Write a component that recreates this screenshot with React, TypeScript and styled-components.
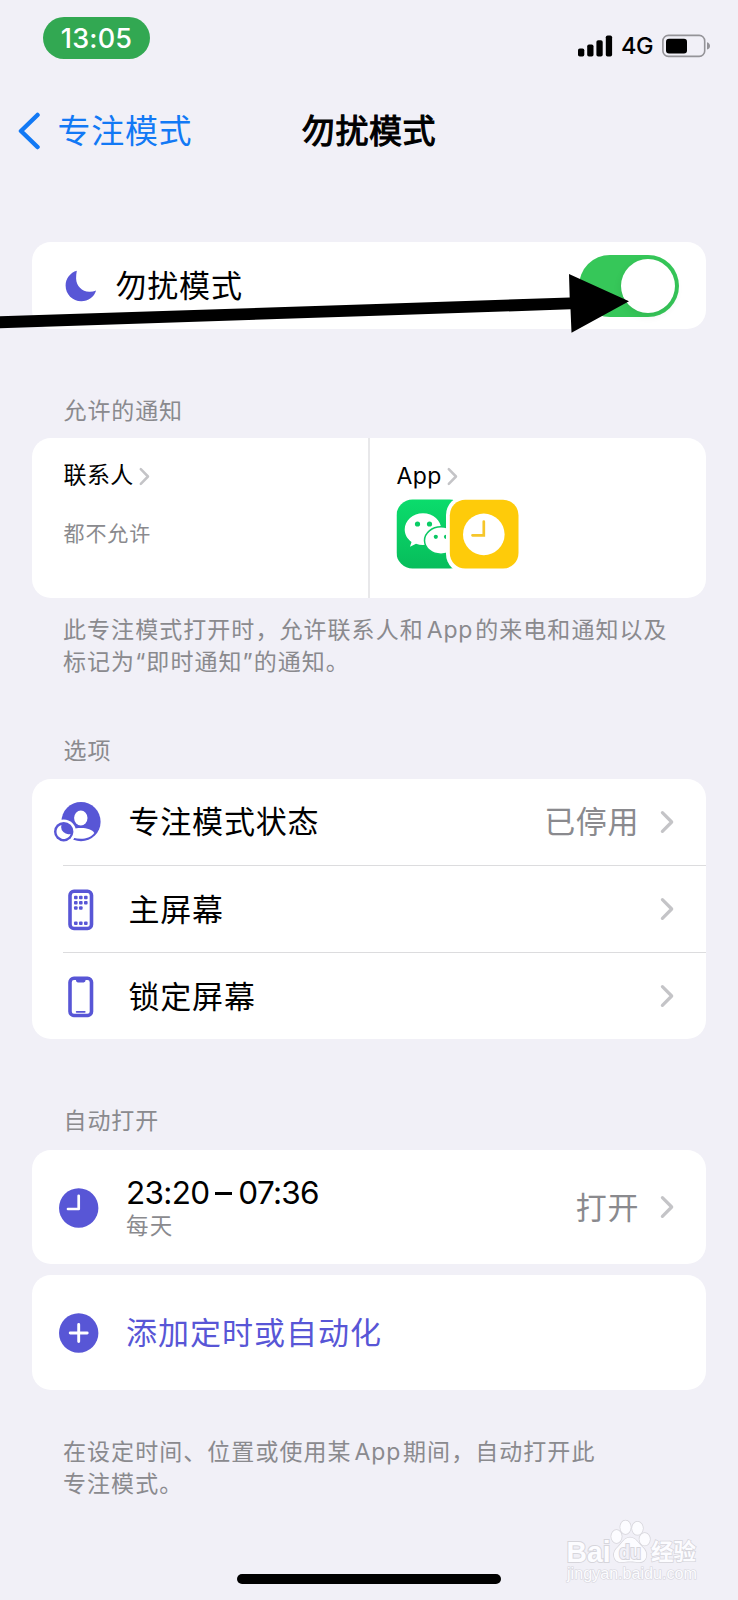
import React from 'react';
import styled, { createGlobalStyle } from 'styled-components';

const INDIGO = '#5856d6';
const GRAY = '#8a8a8e';

const GlobalStyle = createGlobalStyle`
  *, *::before, *::after { box-sizing: border-box; }
  body {
    margin: 0;
    background: #f1f0f7;
    color: #000;
    font-family: Inter, "Noto Sans CJK SC", sans-serif;
    text-autospace: no-autospace;
  }
  svg { display: block; flex: none; }
`;

const Screen = styled.main`
  position: relative;
  width: 738px;
  height: 1600px;
  overflow: hidden;
  display: flex;
  flex-direction: column;
  padding: 0 32px;
`;

const StatusBar = styled.header`
  display: flex;
  justify-content: space-between;
  align-items: flex-start;
  height: 92px;
  margin: 0 -5px 0 11px;
  padding-top: 17px;
`;

const TimePill = styled.div`
  width: 107px;
  height: 42px;
  border-radius: 21px;
  background: #32a852;
  color: #fff;
  font-size: 27px;
  font-weight: 500;
  line-height: 43px;
  letter-spacing: 0.2px;
  text-align: center;
`;

const StatusIcons = styled.div`
  display: flex;
  align-items: center;
  padding-top: 17px;
  height: 40px;
`;

const Network = styled.span`
  width: 33px;
  margin: 0 8px 0 8px;
  font-size: 23.5px;
  font-weight: 500;
  line-height: 24px;
  letter-spacing: -0.5px;
`;

const NavBar = styled.nav`
  display: grid;
  grid-template-columns: 1fr auto 1fr;
  align-items: center;
  height: 76px;
  margin: 0 -14px 74px;
  padding-top: 1px;
`;

const BackLink = styled.a`
  display: flex;
  align-items: center;
  gap: 17.5px;
  color: #1279f5;
  font-size: 33px;
  letter-spacing: 0.7px;
  line-height: 40px;
`;

const Title = styled.h1`
  margin: 0;
  font-size: 33px;
  font-weight: 400;
  line-height: 40px;
  letter-spacing: 0.6px;
  -webkit-text-stroke: 1.1px #000;
`;

const Card = styled.section<{ $height: number; $gap?: number }>`
  flex: none;
  display: flex;
  height: ${(p) => p.$height}px;
  margin-bottom: ${(p) => p.$gap ?? 0}px;
  border-radius: 19px;
  background: #fff;
  overflow: hidden;
`;

const StackCard = styled(Card)`
  flex-direction: column;
`;

const SectionTitle = styled.h2<{ $top: number; $bottom?: number }>`
  flex: none;
  margin: ${(p) => p.$top}px 0 ${(p) => p.$bottom ?? 11}px 31.5px;
  color: ${GRAY};
  font-size: 23px;
  font-weight: 400;
  letter-spacing: 0.9px;
  line-height: 34px;
`;

const Note = styled.p<{ $top: number }>`
  flex: none;
  margin: ${(p) => p.$top}px 0 0 31px;
  color: ${GRAY};
  font-size: 23px;
  letter-spacing: 1.05px;
  line-height: 31.5px;
  white-space: nowrap;
`;

const Latin = styled.span`
  margin: 0 2px 0 3px;
  letter-spacing: 0.8px;
`;

const SwitchRow = styled.div`
  flex: 1;
  display: flex;
  align-items: center;
  padding: 0 27px 0 33px;
`;

const Label = styled.span`
  flex: 1;
  padding-top: 1px;
  margin-left: -0.5px;
  font-size: 31px;
  letter-spacing: 0.8px;
  line-height: 40px;
`;

const Switch = styled.button`
  display: flex;
  justify-content: flex-end;
  width: 100px;
  height: 62px;
  padding: 4px;
  border: 0;
  border-radius: 31px;
  background: #36c759;
`;

const Knob = styled.span`
  width: 54px;
  height: 54px;
  border-radius: 50%;
  background: #fff;
  box-shadow: 0 3px 8px rgba(0, 0, 0, 0.08);
`;

const Half = styled.div<{ $divided?: boolean }>`
  width: ${(p) => (p.$divided ? 338 : 336)}px;
  padding: 20px 0 0 ${(p) => (p.$divided ? 31.5 : 26.5)}px;
  border-right: ${(p) => (p.$divided ? '2px solid #e8e8ea' : '0')};
`;

const HalfTitle = styled.div`
  display: flex;
  align-items: center;
  gap: 5.5px;
  height: 36px;
  font-size: 23px;
  letter-spacing: 0.4px;
  line-height: 34px;
`;

const Muted = styled.div`
  margin-top: 22px;
  color: ${GRAY};
  font-size: 21px;
  letter-spacing: 0.9px;
  line-height: 36px;
`;

const AppStack = styled.div`
  margin: 5px 0 0 -0.5px;
`;

const TitleText = styled.span<{ $lift?: boolean }>`
  padding-bottom: ${(p) => (p.$lift ? 2 : 0)}px;
`;

const Row = styled.div`
  flex: 1;
  display: flex;
  align-items: center;
  padding-right: 32px;
`;

const RowDivider = styled.div`
  height: 1.5px;
  margin-left: 31px;
  background: #dcdcde;
`;

const IconSlot = styled.div<{ $width: number }>`
  width: ${(p) => p.$width}px;
  padding: 1px 0 0 20px;
`;

const Value = styled.span`
  margin-right: 21px;
  padding-top: 1px;
  color: ${GRAY};
  font-size: 31px;
  letter-spacing: 0.6px;
  line-height: 40px;
`;

const Schedule = styled.div`
  flex: 1;
  display: flex;
  flex-direction: column;
`;

const TimeRange = styled.span`
  font-size: 31.5px;
  line-height: 38px;
  letter-spacing: -0.7px;
`;

const Dash = styled.span`
  display: inline-block;
  width: 17px;
  height: 2.6px;
  margin: 0 6px 0 6px;
  background: #000;
  vertical-align: 9px;
`;

const Repeat = styled.span`
  color: ${GRAY};
  font-size: 22.5px;
  letter-spacing: 1.2px;
  line-height: 28px;
`;

const AddLabel = styled(Label)`
  margin-left: 0;
  color: ${INDIGO};
  letter-spacing: 1px;
`;

const HomeIndicator = styled.div`
  flex: none;
  width: 264px;
  height: 10px;
  margin: auto auto 16px;
  border-radius: 5px;
  background: #000;
`;

const ArrowOverlay = styled.svg`
  position: absolute;
  left: 0;
  top: 260px;
`;

const Watermark = styled.svg`
  position: absolute;
  left: 560px;
  top: 1512px;
`;

const Chevron = ({ small }: { small?: boolean }) =>
  small ? (
    <svg width="11" height="19" viewBox="0 0 11 19" fill="none" stroke="#c4c4c7" strokeWidth="2.5" strokeLinecap="round" strokeLinejoin="round">
      <path d="M1.8 2.2 9 9.5 1.8 16.8" />
    </svg>
  ) : (
    <svg width="14" height="24" viewBox="0 0 14 24" fill="none" stroke="#c4c4c7" strokeWidth="3.2" strokeLinecap="round" strokeLinejoin="round">
      <path d="M2.4 2.7 11.7 12 2.4 21.3" />
    </svg>
  );

const FocusStatusIcon = () => (
  <svg width="50" height="44" viewBox="52 801 50 44">
    <circle cx="81" cy="822.7" r="19.6" fill={INDIGO} />
    <ellipse cx="80.8" cy="819" rx="6.7" ry="7.4" fill="#fff" />
    <path d="M66.5 835.5C69 830.8 75 829 81 829s11.5 1.8 13.3 4.9C91 838 86 839.700 81 839.700c-5.500 0-10-1.200-14.500-4.200Z" fill="#fff" />
    <circle cx="63.700" cy="832.700" r="12.300" fill="#fff" />
    <circle cx="63.700" cy="832.700" r="9.700" fill={INDIGO} />
    <path d="M61.500 825.900a7.200 7.200 0 1 0 9.100 9 7.300 7.300 0 0 1-9.100-9Z" fill="#fff" />
  </svg>
);

const HomeScreenIcon = () => (
  <svg width="50" height="42" viewBox="0 0 50 42" fill={INDIGO}>
    <rect x="18" y="2.300" width="21.500" height="37.200" rx="4" fill="none" stroke={INDIGO} strokeWidth="3.600" />
    {[
      [22, 6.7], [27, 6.7], [32, 6.7],
      [22, 12], [27, 12], [32, 12],
      [22, 17.2], [27, 17.2],
      [22, 32.5], [27, 32.5], [32, 32.5],
    ].map(([x, y]) => (
      <rect key={`${x}-${y}`} x={x} y={y} width="3.600" height="3.600" rx="1" />
    ))}
  </svg>
);

const LockScreenIcon = () => (
  <svg width="50" height="42" viewBox="0 0 50 42" fill={INDIGO}>
    <rect x="18" y="2.300" width="21.500" height="37.200" rx="4" fill="none" stroke={INDIGO} strokeWidth="3.600" />
    <path d="M24 3h9.500v1.600q0 1.800-1.800 1.800h-5.900q-1.800 0-1.800-1.800Z" />
    <rect x="23.800" y="35" width="9.800" height="1.700" rx=".8" />
  </svg>
);

const ClockIcon = () => (
  <svg width="54" height="40" viewBox="0 0 54 40" fill="none">
    <circle cx="26.700" cy="20" r="19.700" fill={INDIGO} />
    <path d="M26.700 7.800V21H16" stroke="#fff" strokeWidth="2.700" strokeLinecap="round" strokeLinejoin="round" />
  </svg>
);

const PlusIcon = () => (
  <svg width="54" height="40" viewBox="0 0 54 40" fill="none">
    <circle cx="26.700" cy="20" r="19.700" fill={INDIGO} />
    <path d="M26.700 11.500v17M18.200 20h17" stroke="#fff" strokeWidth="2.900" strokeLinecap="round" />
  </svg>
);

const AppIcons = () => (
  <svg width="124" height="70" viewBox="396.500 499 124 70">
    <defs>
      <linearGradient id="wechat" x1="0" y1="0" x2="0" y2="1">
        <stop offset="0" stopColor="#0bdc6c" />
        <stop offset="1" stopColor="#07bd5b" />
      </linearGradient>
      <clipPath id="tile">
        <rect x="397" y="499.500" width="69" height="69" rx="16" />
      </clipPath>
    </defs>
    <g clipPath="url(#tile)">
      <rect x="397" y="499" width="69" height="70" fill="url(#wechat)" />
      <path d="M423.500 513.300c-10.200 0-18.300 7.200-18.300 16.300 0 5 2.500 9.400 6.800 12.300l-1.500 4.800 6-3a21 21 0 0 0 7 1.200c10.200 0 18.300-6.800 18.300-15.300 0-9.100-8.100-16.300-18.300-16.300Z" fill="#fff" />
      <circle cx="418" cy="524" r="2.600" fill="#09cc65" />
      <circle cx="430" cy="524" r="2.600" fill="#09cc65" />
      <ellipse cx="441.500" cy="540.500" rx="16.500" ry="13.700" fill="#fff" stroke="#0ac863" strokeWidth="1.500" />
      <circle cx="436.300" cy="536.800" r="2.100" fill="#09c763" />
      <circle cx="446.500" cy="536.800" r="2.100" fill="#09c763" />
    </g>
    <rect x="446.500" y="496" width="77" height="77" rx="19" fill="#fff" />
    <rect x="450.300" y="499.800" width="68.700" height="68.700" rx="15.500" fill="#fecb0a" />
    <circle cx="484.300" cy="534.400" r="20.800" fill="#fff" />
    <path d="M484.300 521.500V535.300H473" fill="none" stroke="#f6c62a" strokeWidth="2.700" strokeLinecap="round" />
  </svg>
);

export default function App() {
  return (
    <>
      <GlobalStyle />
      <Screen>
        <StatusBar>
          <TimePill>13:05</TimePill>
          <StatusIcons>
            <svg width="35" height="22" viewBox="0 0 35 22">
              <rect x="0" y="13.500" width="6.300" height="8" rx="1.800" />
              <rect x="9.200" y="9.500" width="6.300" height="12" rx="1.800" />
              <rect x="18.400" y="5.300" width="6.300" height="16.200" rx="1.800" />
              <rect x="27.800" y=".500" width="6.300" height="21" rx="1.800" />
            </svg>
            <Network>4G</Network>
            <svg width="49" height="24" viewBox="0 0 49 24">
              <rect x=".9" y="1.400" width="41.800" height="21" rx="5.500" fill="none" stroke="#949398" strokeWidth="1.600" />
              <rect x="4" y="4.700" width="21" height="14.700" rx="3" />
              <path d="M45 8.200q3 1 3 3.700t-3 3.700Z" fill="#949398" />
            </svg>
          </StatusIcons>
        </StatusBar>

        <NavBar>
          <BackLink>
            <svg width="22" height="38" viewBox="0 0 22 38" fill="none" stroke="#1279f5" strokeWidth="4.500" strokeLinecap="round" strokeLinejoin="round">
              <path d="M19.500 3 3 19l16.500 16" />
            </svg>
            专注模式
          </BackLink>
          <Title>勿扰模式</Title>
        </NavBar>

        <Card $height={87}>
          <SwitchRow>
            <svg width="51" height="32" viewBox="0 0 51 32">
              <path d="M11.800.7C5.300 2.500.6 8.500.6 15.500.6 24.200 7.500 31.300 16.300 31.300c7 0 12.900-4.200 14.800-10.700-2.300.9-4.600 1.300-6.900 1.200C17 21.700 11.300 16 11.100 8.600c0-2.600.2-5.200.7-7.900Z" fill={INDIGO} />
            </svg>
            <Label>勿扰模式</Label>
            <Switch aria-label="勿扰模式">
              <Knob />
            </Switch>
          </SwitchRow>
        </Card>

        <SectionTitle $top={65} $bottom={10}>允许的通知</SectionTitle>
        <Card $height={160}>
          <Half $divided>
            <HalfTitle>
              <TitleText $lift>联系人</TitleText>
              <Chevron small />
            </HalfTitle>
            <Muted>都不允许</Muted>
          </Half>
          <Half>
            <HalfTitle>
              <TitleText>App</TitleText>
              <Chevron small />
            </HalfTitle>
            <AppStack>
              <AppIcons />
            </AppStack>
          </Half>
        </Card>
        <Note $top={17}>
          此专注模式打开时，允许联系人和<Latin>App</Latin>的来电和通知以及
          <br />
          标记为“即时通知”的通知。
        </Note>

        <SectionTitle $top={56}>选项</SectionTitle>
        <StackCard $height={260}>
          <Row>
            <IconSlot $width={97}>
              <FocusStatusIcon />
            </IconSlot>
            <Label>专注模式状态</Label>
            <Value>已停用</Value>
            <Chevron />
          </Row>
          <RowDivider />
          <Row>
            <IconSlot $width={97}>
              <HomeScreenIcon />
            </IconSlot>
            <Label>主屏幕</Label>
            <Chevron />
          </Row>
          <RowDivider />
          <Row>
            <IconSlot $width={97}>
              <LockScreenIcon />
            </IconSlot>
            <Label>锁定屏幕</Label>
            <Chevron />
          </Row>
        </StackCard>

        <SectionTitle $top={65} $bottom={12}>自动打开</SectionTitle>
        <Card $height={114} $gap={11}>
          <Row>
            <IconSlot $width={94}>
              <ClockIcon />
            </IconSlot>
            <Schedule>
              <TimeRange>
                23:20<Dash />07:36
              </TimeRange>
              <Repeat>每天</Repeat>
            </Schedule>
            <Value>打开</Value>
            <Chevron />
          </Row>
        </Card>
        <Card $height={115}>
          <Row>
            <IconSlot $width={94}>
              <PlusIcon />
            </IconSlot>
            <AddLabel>添加定时或自动化</AddLabel>
          </Row>
        </Card>
        <Note $top={47}>
          在设定时间、位置或使用某<Latin>App</Latin>期间，自动打开此
          <br />
          专注模式。
        </Note>

        <HomeIndicator />

        <ArrowOverlay width="640" height="80" viewBox="0 260 640 80">
          <path d="M0 316.300 369 304.300 569.700 297.500 569 274l60 27.300-57.500 31.500-1-23.500L369 316 0 328.300Z" />
        </ArrowOverlay>

        <Watermark width="150" height="76" viewBox="560 1512 150 76" fill="#fcfcff" stroke="#d6d5db" strokeWidth="1.500" paintOrder="stroke">
          <ellipse cx="616.500" cy="1536.500" rx="5.200" ry="6.500" />
          <ellipse cx="625.500" cy="1527.300" rx="5.200" ry="6.800" />
          <ellipse cx="637.500" cy="1528.300" rx="5.400" ry="6.500" />
          <ellipse cx="644.700" cy="1539.300" rx="5.200" ry="6.300" />
          <path d="M630 1537.500c-6 0-8 6-12 9.500-3 2.700-4.500 5.500-4 9 .6 4.500 4 6.500 8 6.200 3-.2 5-.7 8.300-.7s5.300.5 8.300.7c4 .3 7.200-2 7.700-6.200.5-3.500-1.200-6.500-4-9-4-3.500-6.300-9.500-12.300-9.500Z" />
          <g fontFamily="'Liberation Sans', 'Noto Sans CJK SC', sans-serif">
            <text x="566.500" y="1561.500" fontSize="30" fontWeight="700" strokeWidth="2" textLength="44" lengthAdjust="spacingAndGlyphs">Bai</text>
            <text x="619" y="1558.500" fontSize="20" fontWeight="700" fill="#f1f0f7" strokeWidth="2" textLength="22" lengthAdjust="spacingAndGlyphs">du</text>
            <text x="651" y="1559.500" fontSize="23" fontWeight="700" textLength="45" lengthAdjust="spacingAndGlyphs">经验</text>
            <text x="567" y="1578.500" fontSize="16" strokeWidth="1.200" textLength="130" lengthAdjust="spacingAndGlyphs">jingyan.baidu.com</text>
          </g>
        </Watermark>
      </Screen>
    </>
  );
}
